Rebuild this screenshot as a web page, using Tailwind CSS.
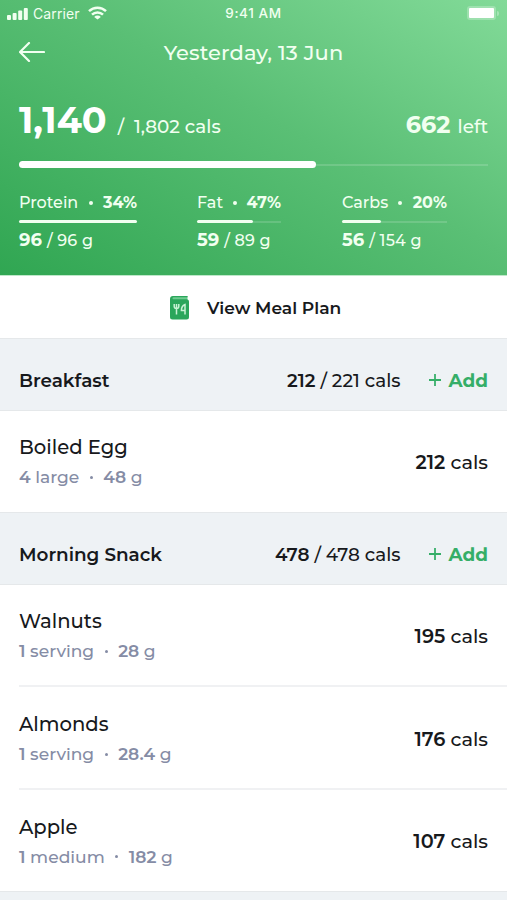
<!DOCTYPE html>
<html lang="en">
<head>
<meta charset="utf-8">
<meta name="viewport" content="width=device-width, initial-scale=1">
<title>Food diary</title>
<script src="https://cdn.jsdelivr.net/npm/@tailwindcss/browser@4"></script>
</head>
<body class="bg-white">
<div class="w-[507px] h-[900px] overflow-hidden flex flex-col font-['Montserrat','Inter',sans-serif] text-[#17191c] whitespace-nowrap">
  <header class="h-[275px] shrink-0 text-[#f1fff0] bg-[linear-gradient(30deg,#30a652_0%,#5abf75_55%,#82da98_100%)]">
    <!-- Status bar -->
    <div class="h-[26px] pl-[7px] pr-[8px] grid grid-cols-3 items-center font-['Inter',sans-serif] text-[13.5px] font-medium">
      <div class="flex items-center">
        <svg class="w-[21px] h-[13px]" viewBox="0 0 21 13" fill="currentColor"><rect x="0" y="8" width="4" height="5" rx="1"/><rect x="5.6" y="6" width="4" height="7" rx="1"/><rect x="11.2" y="3.4" width="4" height="9.6" rx="1"/><rect x="16.8" y="1" width="4" height="12" rx="1"/></svg>
        <span class="ml-[5px] font-normal text-[14px] tracking-[0.1px]">Carrier</span>
        <svg class="ml-[8px] w-[19px] h-[14px]" viewBox="0 0 19 14" fill="none" stroke="currentColor" stroke-width="2.5"><path d="M1 5.200a12.200 12.200 0 0 1 17 0M4 8.700a7.900 7.900 0 0 1 11 0"/><path d="M9.500 13.500 6.200 10.900a4.500 4.500 0 0 1 6.600 0Z" fill="currentColor" stroke="none"/></svg>
      </div>
      <div class="pt-[1px] text-center tracking-[0.6px] pl-[1px]">9:41 AM</div>
      <div class="flex justify-end items-center">
        <div class="w-[29px] h-[14px] rounded-[3px] bg-white/25 p-[2px]"><div class="h-full rounded-[1px] bg-white"></div></div>
        <div class="ml-px w-[2px] h-[5px] rounded-r bg-white/30"></div>
      </div>
    </div>
    <!-- Title -->
    <div class="h-[52px] px-[19px] grid grid-cols-[40px_1fr_40px] items-center">
      <svg class="w-[26px] h-[20px]" viewBox="0 0 26 20" fill="none" stroke="currentColor" stroke-width="2.2" stroke-linecap="round" stroke-linejoin="round"><path d="M25 10H1M10 1 1 10l9 9"/></svg>
      <h1 class="text-center text-[21px] font-medium pt-[1px] tracking-[0.1px]">Yesterday, 13 Jun</h1>
    </div>
    <!-- Calories -->
    <div class="h-[83px] px-[19px] pt-[20px] flex items-baseline">
      <span class="text-[36.6px] font-bold leading-[44px] text-white">1,140</span>
      <span class="ml-[11px] text-[18px] font-medium">/</span>
      <span class="ml-[10px] text-[18.4px] font-medium">1,802 cals</span>
      <span class="ml-auto text-[24px] font-bold">662</span>
      <span class="ml-[7px] text-[18.4px] font-medium">left</span>
    </div>
    <div class="mx-[19px] h-[7px] flex items-center">
      <div class="w-[297px] h-[7px] rounded-full bg-white"></div><div class="flex-1 h-[2px] bg-white/15"></div>
    </div>
    <!-- Macros -->
    <div class="mt-[24px] flex text-[16px]">
      <div class="ml-[19px] w-[118px]">
        <div class="h-[20px] pt-[2px] flex items-center justify-between font-medium"><span>Protein</span><span class="size-[4px] rounded-full bg-current"></span><span class="font-bold">34%</span></div>
        <div class="mt-[8px] h-[3px] rounded-full bg-[#f1fff0]"></div>
        <div class="mt-[7px] h-[20px] flex items-baseline leading-[20px] font-medium"><span class="text-[18px] font-bold">96</span><span class="ml-[5px] tracking-[0.2px]">/ 96 g</span></div>
      </div>
      <div class="ml-[60px] w-[84px]">
        <div class="h-[20px] pt-[2px] flex items-center justify-between font-medium"><span>Fat</span><span class="size-[4px] rounded-full bg-current"></span><span class="font-bold">47%</span></div>
        <div class="mt-[8px] h-[3px] flex items-center"><div class="h-[3px] w-[56px] rounded-full bg-[#f1fff0]"></div><div class="flex-1 h-[2px] bg-white/15"></div></div>
        <div class="mt-[7px] h-[20px] flex items-baseline leading-[20px] font-medium"><span class="text-[18px] font-bold">59</span><span class="ml-[5px] tracking-[0.2px]">/ 89 g</span></div>
      </div>
      <div class="ml-[61px] w-[105px]">
        <div class="h-[20px] pt-[2px] flex items-center justify-between font-medium"><span>Carbs</span><span class="size-[4px] rounded-full bg-current"></span><span class="font-bold">20%</span></div>
        <div class="mt-[8px] h-[3px] flex items-center"><div class="h-[3px] w-[39px] rounded-full bg-[#f1fff0]"></div><div class="flex-1 h-[2px] bg-white/15"></div></div>
        <div class="mt-[7px] h-[20px] flex items-baseline leading-[20px] font-medium"><span class="text-[18px] font-bold">56</span><span class="ml-[5px] tracking-[0.2px]">/ 154 g</span></div>
      </div>
    </div>
  </header>

  <div class="h-[63px] shrink-0 flex items-center pl-[170px] pt-[1px] border-t border-[#bfe8ca] font-semibold text-[17.1px]">
    <svg class="w-[19px] h-[24px]" viewBox="0 0 19 24"><path d="M3 0h14.500v4H2V1Z" fill="#6fcb90"/><path d="M3 0h14.500v1.200H3.500a1 1 0 0 0 0 2h13a2.500 2.500 0 0 1 2.500 2.500V21a2.500 2.500 0 0 1-2.500 2.500H2.500A2.500 2.500 0 0 1 0 21V3a3 3 0 0 1 3-3Z" fill="#2ba65b"/><path d="M4.200 8v2.200a2.300 2.300 0 0 0 4.600 0V8M6.500 8v10.500M15 18.500V8.500c-1.800.7-3.600 3.200-3.600 6H15" fill="none" stroke="#c9f2d5" stroke-width="1.500"/></svg>
    <span class="ml-[18px]">View Meal Plan</span>
  </div>

  <section>
    <div class="h-[73px] px-[19px] pt-[13px] border-y border-[#e5e8ea] bg-[#eef2f5] flex items-center text-[18.4px]">
      <h2 class="font-semibold">Breakfast</h2>
      <span class="ml-auto font-medium"><b class="font-semibold">212</b> / 221 cals</span>
      <svg class="ml-[28px] -mt-[2px] size-[12px]" viewBox="0 0 13 13" stroke="#35ae68" stroke-width="1.900"><path d="M0 6.500h13M6.500 0v13"/></svg>
      <span class="ml-[8px] font-bold text-[#35ae68]">Add</span>
    </div>
    <div class="h-[101px] px-[19px] pt-[1px] flex items-center justify-between">
      <div><div class="h-[30px] leading-[31px] text-[19.6px] font-medium">Boiled Egg</div><div class="h-[30px] leading-[30px] text-[17.1px] font-medium text-[#858ca5] flex items-center"><span><b class="font-semibold">4</b> large</span><span class="mx-[10.5px] size-[3px] rounded-full bg-current"></span><span><b class="font-semibold">48</b> g</span></div></div>
      <div class="text-[19.3px] font-medium"><b class="font-semibold">212</b> cals</div>
    </div>
  </section>
  <section>
    <div class="h-[73px] px-[19px] pt-[13px] border-y border-[#e5e8ea] bg-[#eef2f5] flex items-center text-[18.4px]">
      <h2 class="font-semibold">Morning Snack</h2>
      <span class="ml-auto font-medium"><b class="font-semibold">478</b> / 478 cals</span>
      <svg class="ml-[28px] -mt-[2px] size-[12px]" viewBox="0 0 13 13" stroke="#35ae68" stroke-width="1.900"><path d="M0 6.500h13M6.500 0v13"/></svg>
      <span class="ml-[8px] font-bold text-[#35ae68]">Add</span>
    </div>
    <div class="ml-[19px] h-[102px] pr-[19px] pt-[2px] border-b-2 border-[#f0f1f3] flex items-center justify-between">
      <div><div class="h-[30px] leading-[31px] text-[19.6px] font-medium">Walnuts</div><div class="h-[30px] leading-[30px] text-[17.1px] font-medium text-[#858ca5] flex items-center"><span><b class="font-semibold">1</b> serving</span><span class="mx-[10.5px] size-[3px] rounded-full bg-current"></span><span><b class="font-semibold">28</b> g</span></div></div>
      <div class="text-[19.3px] font-medium"><b class="font-semibold">195</b> cals</div>
    </div>
    <div class="ml-[19px] h-[103px] pr-[19px] pt-[3px] border-b-2 border-[#f0f1f3] flex items-center justify-between">
      <div><div class="h-[30px] leading-[31px] text-[19.6px] font-medium">Almonds</div><div class="h-[30px] leading-[30px] text-[17.1px] font-medium text-[#858ca5] flex items-center"><span><b class="font-semibold">1</b> serving</span><span class="mx-[10.5px] size-[3px] rounded-full bg-current"></span><span><b class="font-semibold">28.4</b> g</span></div></div>
      <div class="text-[19.3px] font-medium"><b class="font-semibold">176</b> cals</div>
    </div>
    <div class="ml-[19px] h-[101px] pr-[19px] pt-[2px] flex items-center justify-between">
      <div><div class="h-[30px] leading-[31px] text-[19.6px] font-medium">Apple</div><div class="h-[30px] leading-[30px] text-[17.1px] font-medium text-[#858ca5] flex items-center"><span><b class="font-semibold">1</b> medium</span><span class="mx-[10.5px] size-[3px] rounded-full bg-current"></span><span><b class="font-semibold">182</b> g</span></div></div>
      <div class="text-[19.3px] font-medium"><b class="font-semibold">107</b> cals</div>
    </div>
  </section>
  <div class="h-[10px] shrink-0 border-t border-[#e5e8ea] bg-[#eef2f5]"></div>
</div>
</body>
</html>
